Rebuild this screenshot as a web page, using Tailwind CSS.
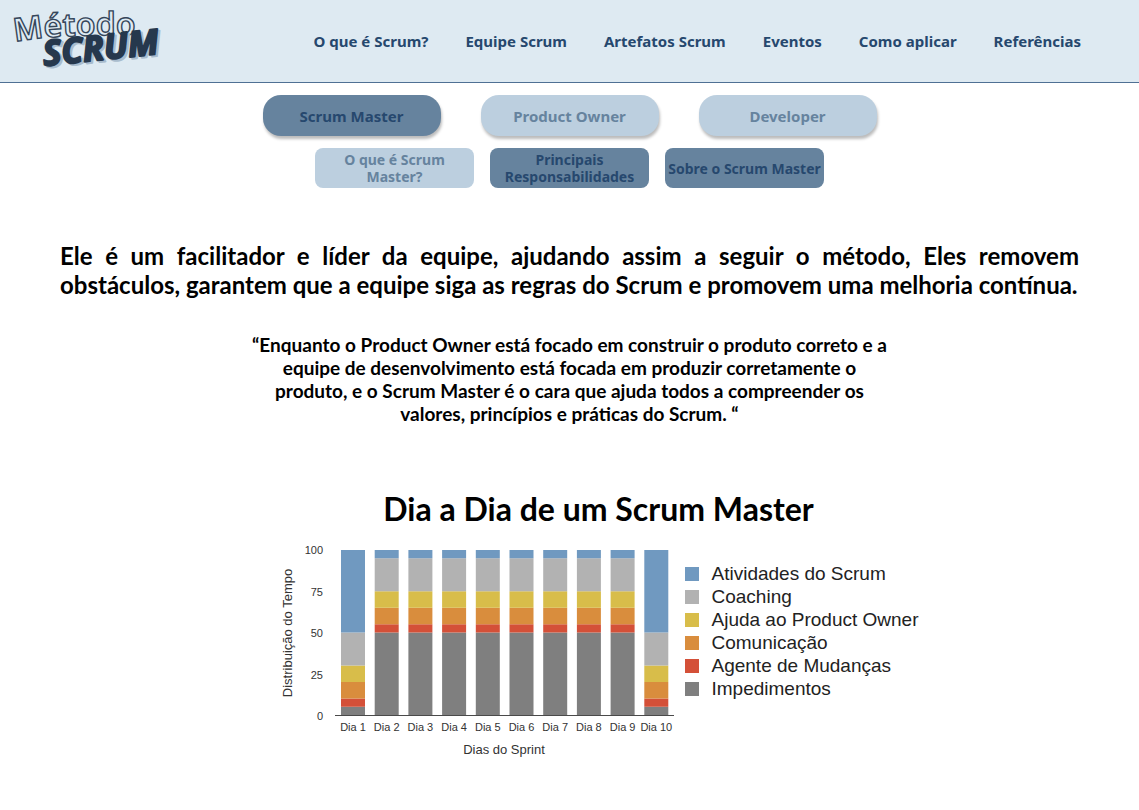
<!DOCTYPE html>
<html lang="pt-BR">
<head>
<meta charset="utf-8">
<meta name="viewport" content="width=device-width, initial-scale=1">
<title>Método Scrum</title>
<script src="https://cdn.jsdelivr.net/npm/@tailwindcss/browser@4"></script>
</head>
<body class="bg-white text-black font-['Lato',sans-serif]">
<header class="flex h-[83px] items-center justify-between border-b border-[#4f7094] bg-[#deeaf2] pr-[58px] pl-2">
  <a href="#" aria-label="Método Scrum">
    <svg class="block" width="160" height="82" viewBox="0 0 160 82">
      <path id="arc" d="M7 42Q50 33 150 36" fill="none"/>
      <text font-family="Noto Sans" font-weight="600" font-size="32" fill="#deeaf2" stroke="#35465a" stroke-width="1.4"><textPath href="#arc">Método</textPath></text>
      <g transform="rotate(-6 36 66)" font-family="Open Sans" font-weight="700" font-style="italic" font-size="35" stroke-linejoin="round" stroke-linecap="round" stroke-width="2">
        <text x="38" y="68" fill="#a9bccd" stroke="#a9bccd">SCRUM</text>
        <text x="36" y="66" fill="#26384d" stroke="#26384d">SCRUM</text>
      </g>
    </svg>
  </a>
  <nav class="flex gap-[37px] font-['Noto_Sans',sans-serif] text-[15px] leading-6 font-bold text-[#26486e]">
    <a href="#">O que é Scrum?</a>
    <a href="#">Equipe Scrum</a>
    <a href="#">Artefatos Scrum</a>
    <a href="#">Eventos</a>
    <a href="#">Como aplicar</a>
    <a href="#">Referências</a>
  </nav>
</header>
<main>
  <div class="mt-3 flex justify-center gap-10 font-['Noto_Sans',sans-serif] text-[15px] leading-6 font-bold">
    <button class="h-[41px] w-[178px] rounded-[18px] bg-[#66839e] text-[#26486e] shadow-[1px_3px_3px_#0004]">Scrum Master</button>
    <button class="h-[41px] w-[178px] rounded-[18px] bg-[#bccfdf] text-[#66839e] shadow-[1px_3px_3px_#0004]">Product Owner</button>
    <button class="h-[41px] w-[178px] rounded-[18px] bg-[#bccfdf] text-[#66839e] shadow-[1px_3px_3px_#0004]">Developer</button>
  </div>
  <div class="mt-3 flex justify-center gap-4 font-['Noto_Sans',sans-serif] text-[14px] leading-[17px] font-bold">
    <button class="h-10 w-[159px] rounded-lg bg-[#bccfdf] text-[#66839e]">O que é Scrum<br>Master?</button>
    <button class="h-10 w-[159px] rounded-lg bg-[#66839e] text-[#26486e]">Principais<br>Responsabilidades</button>
    <button class="h-10 w-[159px] rounded-lg bg-[#66839e] whitespace-nowrap text-[#26486e]">Sobre o Scrum Master</button>
  </div>
  <p class="mx-[60px] mt-[53px] text-justify text-[24px] leading-[29px] font-bold">Ele é um facilitador e líder da equipe, ajudando assim a seguir o método, Eles removem obstáculos, garantem que a equipe siga as regras do Scrum e promovem uma melhoria contínua.</p>
  <p class="mt-[34px] text-center text-[19px] leading-[23px] font-bold">“Enquanto o Product Owner está focado em construir o produto correto e a<br>equipe de desenvolvimento está focada em produzir corretamente o<br>produto, e o Scrum Master é o cara que ajuda todos a compreender os<br>valores, princípios e práticas do Scrum. “</p>
  <h1 class="mt-[64px] pl-[58px] text-center text-[32px] leading-10 font-bold">Dia a Dia de um Scrum Master</h1>
  <figure class="mt-[10px] flex justify-center gap-2 pl-[60px] font-['Liberation_Sans',sans-serif] text-[#333]">
    <svg id="chart" class="block shrink-0" width="397" height="225" viewBox="0 0 397 225" role="img" aria-label="Distribuição do Tempo por Dias do Sprint" font-size="11" fill="#333"></svg>
    <ul class="flex shrink-0 flex-col pt-[23px] text-[19px] leading-[23px] whitespace-nowrap text-[#222]">
      <li class="flex items-center gap-3"><span class="size-[14px] bg-[#7099c0]"></span>Atividades do Scrum</li>
      <li class="flex items-center gap-3"><span class="size-[14px] bg-[#b2b2b2]"></span>Coaching</li>
      <li class="flex items-center gap-3"><span class="size-[14px] bg-[#d8bd4a]"></span>Ajuda ao Product Owner</li>
      <li class="flex items-center gap-3"><span class="size-[14px] bg-[#d98d3d]"></span>Comunicação</li>
      <li class="flex items-center gap-3"><span class="size-[14px] bg-[#d45038]"></span>Agente de Mudanças</li>
      <li class="flex items-center gap-3"><span class="size-[14px] bg-[#7f7f7f]"></span>Impedimentos</li>
    </ul>
  </figure>
</main>
<script>
const colors = ['#7f7f7f', '#d45038', '#d98d3d', '#d8bd4a', '#b2b2b2', '#7099c0'];
const edge = [5, 5, 10, 10, 20, 50];
const middle = [50, 5, 10, 10, 20, 5];
let out = '';
for (const v of [0, 25, 50, 75, 100]) {
  out += `<text x="43" y="${181 - v * 1.66}" text-anchor="end">${v}</text>`;
}
for (let day = 0; day < 10; day++) {
  const x = 61 + day * 33.7;
  let y = 176;
  (day === 0 || day === 9 ? edge : middle).forEach((v, i) => {
    const h = v * 1.65;
    y -= h;
    out += `<rect x="${x}" y="${y}" width="24" height="${h}" fill="${colors[i]}"/>`;
  });
  out += `<text x="${x + 12}" y="192" text-anchor="middle">Dia ${day + 1}</text>`;
}
out += '<path d="M55 176.500H394" stroke="#4a4a4a"/>';
out += '<text x="224" y="215" font-size="13" text-anchor="middle">Dias do Sprint</text>';
out += '<text transform="translate(12 94) rotate(-90)" font-size="13" text-anchor="middle">Distribuição do Tempo</text>';
document.getElementById('chart').innerHTML = out;
</script>
</body>
</html>
